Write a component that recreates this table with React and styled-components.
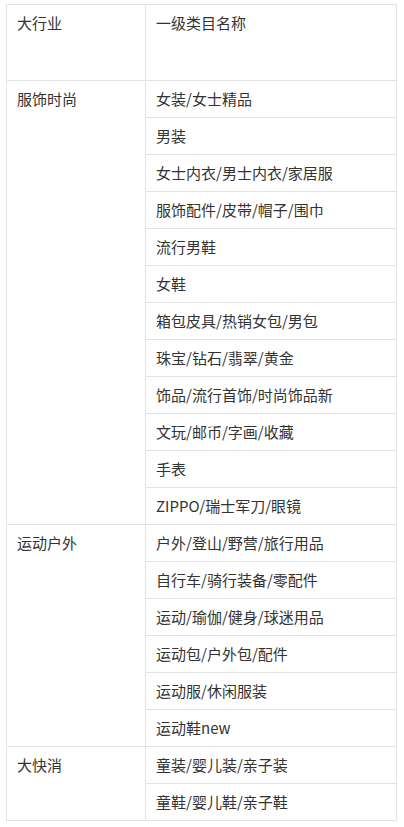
import styled, { createGlobalStyle } from 'styled-components';

const GlobalStyle = createGlobalStyle`
  html, body {
    margin: 0;
    padding: 0;
    background: #fff;
  }
  body {
    font-family: "Noto Sans CJK SC", "Noto Sans", sans-serif;
    color: #333;
  }
`;

const Page = styled.div`
  padding: 4px 8px 4px 6px;
`;

const Table = styled.table`
  width: 391px;
  border-collapse: collapse;
  table-layout: fixed;
  font-size: 15px;
  line-height: 20px;
`;

const Cell = styled.td`
  border: 1px solid #e3e3e3;
  padding: 8px 10px 8px 10px;
  vertical-align: ${({ $top }) => ($top ? 'top' : 'middle')};
  height: ${({ $tall }) => ($tall ? '59px' : '20px')};
  white-space: nowrap;
  color: #333;
`;

const groups = [
  {
    name: '服饰时尚',
    items: [
      '女装/女士精品',
      '男装',
      '女士内衣/男士内衣/家居服',
      '服饰配件/皮带/帽子/围巾',
      '流行男鞋',
      '女鞋',
      '箱包皮具/热销女包/男包',
      '珠宝/钻石/翡翠/黄金',
      '饰品/流行首饰/时尚饰品新',
      '文玩/邮币/字画/收藏',
      '手表',
      'ZIPPO/瑞士军刀/眼镜',
    ],
  },
  {
    name: '运动户外',
    items: [
      '户外/登山/野营/旅行用品',
      '自行车/骑行装备/零配件',
      '运动/瑜伽/健身/球迷用品',
      '运动包/户外包/配件',
      '运动服/休闲服装',
      '运动鞋new',
    ],
  },
  {
    name: '大快消',
    items: ['童装/婴儿装/亲子装', '童鞋/婴儿鞋/亲子鞋'],
  },
];

export default function App() {
  return (
    <>
      <GlobalStyle />
      <Page>
        <Table>
          <colgroup>
            <col style={{ width: 139 }} />
            <col />
          </colgroup>
          <tbody>
            <tr>
              <Cell $top $tall>大行业</Cell>
              <Cell $top $tall>一级类目名称</Cell>
            </tr>
            {groups.map((g) =>
              g.items.map((item, i) => (
                <tr key={g.name + item}>
                  {i === 0 && (
                    <Cell $top rowSpan={g.items.length}>
                      {g.name}
                    </Cell>
                  )}
                  <Cell>{item}</Cell>
                </tr>
              ))
            )}
          </tbody>
        </Table>
      </Page>
    </>
  );
}
